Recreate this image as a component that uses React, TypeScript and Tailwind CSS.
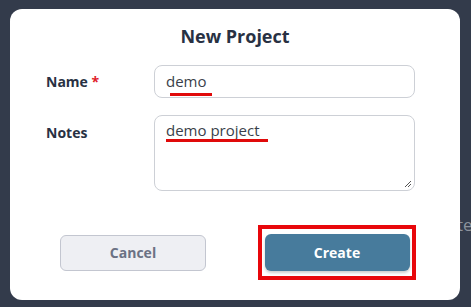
import React from "react";

export default function App() {
  return (
    <div
      className="w-[471px] h-[307px] bg-[#333b4b] relative overflow-hidden pt-[9px] pl-[10px]"
      style={{ fontFamily: '"Open Sans", "Liberation Sans", sans-serif' }}
    >
      <span className="absolute left-[457px] top-[216px] text-[17px] text-[#8c929c] leading-none">te</span>
      <div className="relative w-[450px] h-[291px] bg-white rounded-[12px] flex flex-col">
        <h1 className="text-center text-[18px] font-bold text-[#283143] mt-[16px] leading-[22px]">
          New Project
        </h1>
        <div className="flex items-center mt-[18px]">
          <div className="w-[144px] pl-[36px] text-[14px] font-bold text-[#283143]">
            Name <span className="text-[#e0202a]">*</span>
          </div>
          <div className="relative w-[261px] h-[33px] border border-[#cdd0d6] rounded-[8px] flex items-center pl-[11px] text-[15px] text-[#3a3f4a]">
            demo
            <div className="absolute left-[15px] top-[27px] w-[42px] h-[3px] bg-[#e00a0a]" />
          </div>
        </div>
        <div className="flex items-start mt-[17px]">
          <div className="w-[144px] pl-[36px] pt-[7px] text-[14px] font-bold text-[#283143]">Notes</div>
          <div className="relative w-[261px] h-[76px] border border-[#cdd0d6] rounded-[8px] pl-[11px] pt-[3px] text-[15px] text-[#3a3f4a]">
            demo project
            <div className="absolute left-[11px] top-[23px] w-[102px] h-[3px] bg-[#e00a0a]" />
            <svg className="absolute right-[2px] bottom-[2px]" width="8" height="8" viewBox="0 0 8 8">
              <path d="M1 7 L7 1 M4 7 L7 4" stroke="#555" strokeWidth="1" />
            </svg>
          </div>
        </div>
        <div className="flex items-center mt-[34px]">
          <button className="ml-[50px] w-[146px] h-[36px] rounded-[6px] bg-[#eeeff3] border border-[#c3c6d0] text-[14px] font-bold text-[#6b7284]">
            Cancel
          </button>
          <div className="ml-[52px] w-[158px] h-[55px] border-[4px] border-[#e8070b] flex items-center justify-center">
            <button className="w-[145px] h-[37px] rounded-[6px] bg-[#477b9c] text-white text-[14px] font-bold shadow-[0_2px_3px_rgba(0,0,0,0.2)]">
              Create
            </button>
          </div>
        </div>
      </div>
    </div>
  );
}
